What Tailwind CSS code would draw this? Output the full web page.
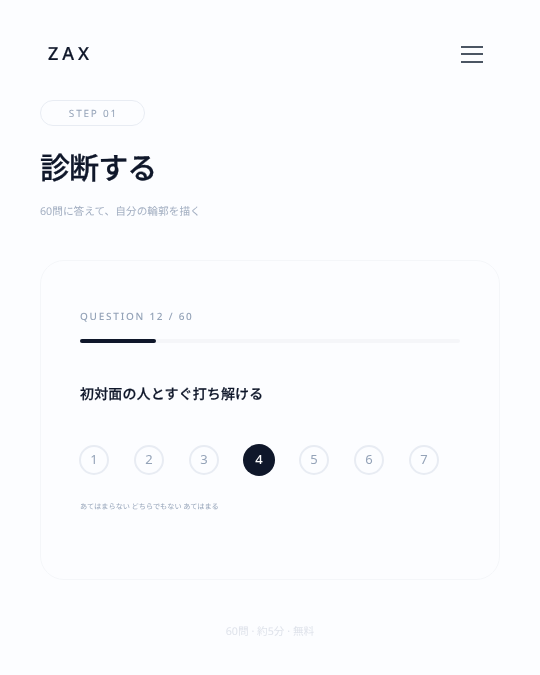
<!DOCTYPE html>
<html lang="ja">
<head>
    <meta charset="UTF-8">
    <meta name="viewport" content="width=device-width, initial-scale=1.0">
    <title>ZAX - 診断する</title>
    <script src="https://cdn.jsdelivr.net/npm/@tailwindcss/browser@4"></script>
</head>
<body class="bg-[#fcfdff] text-[#0f172a] font-['Noto_Sans','Noto_Sans_CJK_JP',sans-serif] [text-rendering:geometricPrecision]">
    <div class="w-[540px] h-[675px] overflow-hidden px-10 pt-10 [will-change:transform]">

        <!-- Header -->
        <header class="flex items-center justify-between h-7 pl-2 pr-[17px]">
            <span class="text-lg leading-7 font-medium tracking-[0.22em] [-webkit-text-stroke:0.2px]">ZAX</span>
            <button class="flex flex-col gap-[5.5px] w-[22px]">
                <span class="h-[2px] bg-[#4b5563]"></span>
                <span class="h-[2px] bg-[#4b5563]"></span>
                <span class="h-[2px] bg-[#4b5563]"></span>
            </button>
        </header>

        <!-- Title -->
        <div class="mt-[32px] w-[105px] h-[26px] pl-[2px] flex items-center justify-center rounded-full border border-[#e8ecf3] text-[10px] tracking-[0.18em] text-[#94a3b8]">STEP 01</div>
        <h1 class="mt-[22px] text-[30px] leading-[40px] font-medium tracking-[-0.03em] [-webkit-text-stroke:0.3px]">診断する</h1>
        <p class="mt-[15px] text-[10.7px] leading-[18px] text-[#a3afc2]">60問に答えて、自分の輪郭を描く</p>

        <!-- Question card -->
        <section class="mt-[39px] h-[320px] rounded-3xl border border-[#f4f6f9] p-[39px]">
            <p class="mt-[9px] text-[10px] leading-[14px] font-medium tracking-[0.175em] text-[#94a3b8]">QUESTION 12 / 60</p>
            <div class="mt-[16px] h-1 rounded-full bg-[#f5f6f9]">
                <div class="h-1 rounded-full bg-[#0f172a]" style="width: 20%"></div>
            </div>
            <h2 class="mt-[40px] text-[14px] leading-[24px] font-medium tracking-[0.01em] [-webkit-text-stroke:0.2px]">初対面の人とすぐ打ち解ける</h2>
            <div class="mt-[37px] -ml-px flex items-center gap-[25px]">
                <button class="w-[30px] h-[30px] rounded-full border-2 border-[#e8ecf3] text-[13px] text-[#94a3b8]">1</button>
                <button class="w-[30px] h-[30px] rounded-full border-2 border-[#e8ecf3] text-[13px] text-[#94a3b8]">2</button>
                <button class="w-[30px] h-[30px] rounded-full border-2 border-[#e8ecf3] text-[13px] text-[#94a3b8]">3</button>
                <button class="w-[32px] h-[32px] -mx-[1px] rounded-full bg-[#0f172a] text-[13px] font-medium text-white">4</button>
                <button class="w-[30px] h-[30px] rounded-full border-2 border-[#e8ecf3] text-[13px] text-[#94a3b8]">5</button>
                <button class="w-[30px] h-[30px] rounded-full border-2 border-[#e8ecf3] text-[13px] text-[#94a3b8]">6</button>
                <button class="w-[30px] h-[30px] rounded-full border-2 border-[#e8ecf3] text-[13px] text-[#94a3b8]">7</button>
            </div>
            <div class="mt-[24px] flex gap-[1.5px] text-[7.2px] leading-[14px] text-[#94a3b8]">
                <span>あてはまらない</span>
                <span>どちらでもない</span>
                <span>あてはまる</span>
            </div>
        </section>

        <p class="mt-[43px] text-center text-[10.7px] leading-[18px] text-[#dfe3eb]">60問 · 約5分 · 無料</p>
    </div>
</body>
</html>
